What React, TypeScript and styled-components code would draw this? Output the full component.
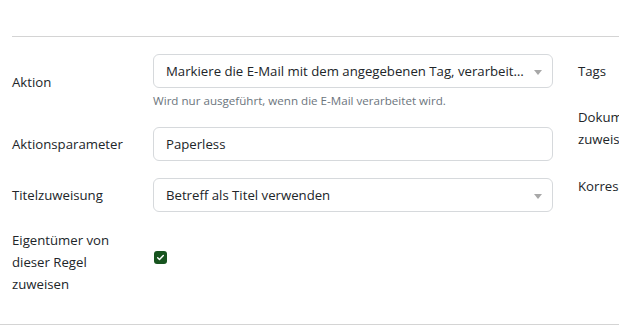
import React from "react";
import styled, { createGlobalStyle } from "styled-components";

const GlobalStyle = createGlobalStyle`
    body {
        margin: 0;
        background: #ffffff;
        font-family: "Open Sans", "Noto Sans", sans-serif;
        font-size: 13.2px;
        color: #212529;
        overflow: hidden;
    }
`;

const Page = styled.div`
    width: 619px;
    height: 332px;
    overflow: hidden;
    padding-top: 36px;
    box-sizing: border-box;
`;
const TopRule = styled.div`
    margin-left: 12px;
    border-top: 1px solid #d4d4d4;
`;
const Columns = styled.div`
    display: grid;
    grid-template-columns: 566px 300px;
    padding-top: 17px;
    padding-bottom: 29px;
    border-bottom: 1px solid #d4d4d4;
    overflow: hidden;
`;
const MainCol = styled.div`
    display: flex;
    flex-direction: column;
    gap: 17px;
`;
const Row = styled.div`
    display: grid;
    grid-template-columns: 141px 424px;
    align-items: center;
`;
const Label = styled.div`
    padding: 0 12px;
    line-height: 22px;
`;
const Field = styled.div`
    padding: 0 12px;
`;
const Control = styled.div<{ $select?: boolean }>`
    height: 34px;
    box-sizing: border-box;
    border: 1px solid #d6d9dc;
    border-radius: 6px;
    display: flex;
    align-items: center;
    padding: 0 ${(p) => (p.$select ? "28px" : "12px")} 0 12px;
    position: relative;
    white-space: nowrap;
    overflow: hidden;
`;
const Value = styled.span`
    overflow: hidden;
    text-overflow: ellipsis;
`;
const Caret = styled.span`
    position: absolute;
    right: 10px;
    top: 15px;
    width: 0;
    height: 0;
    border-left: 4px solid transparent;
    border-right: 4px solid transparent;
    border-top: 5px solid #a8a8a8;
`;
const Help = styled.div`
    margin-top: 4px;
    font-size: 11.6px;
    color: #6c757d;
    line-height: 18px;
`;
const Check = styled.span`
    display: flex;
    align-items: center;
    justify-content: center;
    width: 13px;
    height: 13px;
    margin-left: 1px;
    margin-top: -10px;
    border-radius: 3px;
    background: #17541f;
`;
const SideCol = styled.div`
    display: flex;
    flex-direction: column;
    gap: 16px;
`;
const SideRow = styled.div<{ $h: number }>`
    height: ${(p) => p.$h}px;
    display: flex;
    align-items: center;
    padding-left: 12px;
    line-height: 21.5px;
    white-space: pre;
`;

const Select = ({ value }: { value: string }) => (
    <Control $select>
        <Value>{value}</Value>
        <Caret />
    </Control>
);

const App = () => {
    return (
        <Page>
            <GlobalStyle />
            <TopRule />
            <Columns>
                <MainCol>
                    <Row>
                        <Label>Aktion</Label>
                        <Field>
                            <Select value="Markiere die E-Mail mit dem angegebenen Tag, verarbeite sie jedoch nicht" />
                            <Help>Wird nur ausgeführt, wenn die E-Mail verarbeitet wird.</Help>
                        </Field>
                    </Row>
                    <Row>
                        <Label>Aktionsparameter</Label>
                        <Field>
                            <Control>Paperless</Control>
                        </Field>
                    </Row>
                    <Row>
                        <Label>Titelzuweisung</Label>
                        <Field>
                            <Select value="Betreff als Titel verwenden" />
                        </Field>
                    </Row>
                    <Row>
                        <Label>Eigentümer von dieser Regel zuweisen</Label>
                        <Field>
                            <Check>
                                <svg width="9" height="9" viewBox="0 0 16 16">
                                    <path d="M3 8.5l3.2 3L13 4.5" fill="none" stroke="#fff" strokeWidth="2.6" strokeLinecap="round" strokeLinejoin="round" />
                                </svg>
                            </Check>
                        </Field>
                    </Row>
                </MainCol>
                <SideCol>
                    <SideRow $h={36}>Tags</SideRow>
                    <SideRow $h={45}>{"Dokumenttyp\nzuweisen"}</SideRow>
                    <SideRow $h={40}>Korrespondent</SideRow>
                </SideCol>
            </Columns>
        </Page>
    );
};
export default App;
